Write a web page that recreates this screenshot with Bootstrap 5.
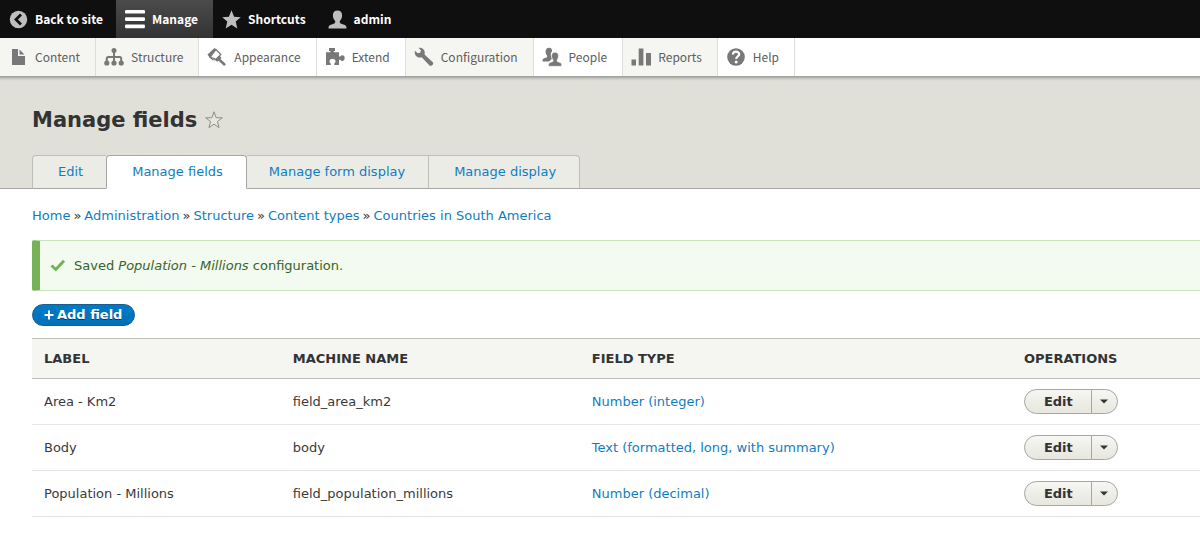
<!DOCTYPE html>
<html lang="en">
<head>
<meta charset="utf-8">
<meta name="viewport" content="width=device-width, initial-scale=1">
<title>Manage fields</title>
<link href="https://cdn.jsdelivr.net/npm/bootstrap@5.3.0/dist/css/bootstrap.min.css" rel="stylesheet">
<style>
  body { font: 13px/20px "DejaVu Sans", sans-serif; color: #3a3a3a; background: #fff; overflow-x: hidden; }
  a { color: #117dc1; text-decoration: none; }
  main a:hover { text-decoration: underline; }
  svg { display: block; flex: none; }

  /* Toolbar */
  .admin-bar, .admin-tray { font-family: "Noto Sans CJK SC", sans-serif; font-size: 12px; line-height: 18px; }
  .admin-bar { background: #0f0f0f; height: 38px; position: relative; z-index: 2; }
  .admin-bar a { color: #fff; font-weight: 700; gap: 7px; padding: 0 13px 0 9px; }
  .admin-bar a.current { background: linear-gradient(#4b4b4b, #333); padding-right: 15px; }
  .admin-bar svg { fill: #bebebe; }
  .admin-bar .current svg { fill: #fff; }
  .admin-tray { background: #fff; height: 38px; box-shadow: 0 0 3px 2px #969696; position: relative; }
  .admin-tray a { color: #5e5e5e; gap: 7px; padding: 0 15px 0 8px; border-right: 1px solid #ddd; }
  .admin-tray a.shaded { background: #f5f5f2; }
  .admin-tray svg { fill: #787878; }

  /* Page header and tabs */
  .page-head { background: #e0e0d8; border-bottom: 1px solid #a6a6a6; padding: 30px 0 0 32px; }
  .page-head h1 { font-size: 21px; line-height: 28px; font-weight: 700; color: #333; }
  .page-tabs { border: 0; margin: 21px 0 -1px; }
  .page-tabs .nav-link { color: #117dc1; background: #ebece6; border: 1px solid #bfbfba; border-width: 1px 0 1px 1px; border-bottom-color: #a6a6a6; border-radius: 0; margin: 0; padding: 6px 23px 6px 25px; }
  .page-tabs .nav-item:first-child .nav-link { border-top-left-radius: 4px; }
  .page-tabs .nav-item:last-child .nav-link { border-right-width: 1px; border-top-right-radius: 4px; }
  .page-tabs .nav-link.active { color: #117dc1; background: #fff; border: 1px solid #a6a6a6; border-bottom-color: #fff; border-radius: 4px 4px 0 0; }
  .page-tabs .after-active .nav-link { border-left-width: 0; padding-left: 22px; }

  /* Content */
  .page-body { padding: 17px 0 18px 32px; }
  .trail { --bs-breadcrumb-divider: "»"; --bs-breadcrumb-item-padding-x: 3px; --bs-breadcrumb-divider-color: #333; font-size: 13px; margin-bottom: 14px; }
  .status-message { color: #38632a; background: #f3faef; border: 1px solid #c9e1bd; border-left: 8px solid #77b259; border-right: 0; border-radius: 2px 0 0 2px; padding: 15px 10px 14px; gap: 8px; margin-bottom: 13px; }
  .add-field { color: #fff; background: linear-gradient(#007bc6, #0071b8); border: 1px solid #1e5c90; border-radius: 20px; font-size: 13px; line-height: 20px; font-weight: 700; padding: 0 12px 0 11px; gap: 3px; text-shadow: 0 1px rgba(0,0,0,.5); }
  .add-field:hover { color: #fff; }
  .fields-list { margin: 12px 0 0; color: #3a3a3a; table-layout: fixed; }
  .fields-list th, .fields-list td { padding: 10px 12px; line-height: 20px; }
  .fields-list thead th { background: #f5f5f2; color: #333; border-top: 1px solid #bfbfba; border-bottom: 1px solid #bfbfba; padding: 10px 12px 9px; text-transform: uppercase; }
  .fields-list tbody td { border-bottom: 1px solid #e6e4df; color: #3a3a3a; }
  .ops { height: 25px; vertical-align: top; }
  .ops .btn { color: #333; background: linear-gradient(#f6f6f3, #e7e7df); border: 1px solid #a6a6a6; font-size: 13px; line-height: 20px; font-weight: 700; padding: 1px 18px 1px 19px; }
  .ops .btn:first-child { border-radius: 20px 0 0 20px; }
  .ops .btn:last-child { border-radius: 0 20px 20px 0; padding: 0 9px 0 8px; }
</style>
</head>
<body>
<nav class="admin-bar d-flex" aria-label="Toolbar">
  <a href="#" class="d-flex align-items-center"><svg width="19" height="19" viewBox="0 0 19 19"><circle cx="9.5" cy="9.5" r="8.7"/><path d="M12 4.5 7 9.5l5 5" fill="none" stroke="#0f0f0f" stroke-width="2.8"/></svg>Back to site</a>
  <a href="#" class="d-flex align-items-center current"><svg width="20" height="20" viewBox="0 0 20 20"><rect y="1" width="20" height="3.6" rx="1.2"/><rect y="8.3" width="20" height="3.6" rx="1.2"/><rect y="15.6" width="20" height="3.6" rx="1.2"/></svg>Manage</a>
  <a href="#" class="d-flex align-items-center"><svg width="19" height="19" viewBox="0 0 19 19"><path d="m9.5.3 2.6 6.4 6.7.5-5.1 4.4 1.6 6.9-5.8-3.7-5.8 3.7 1.6-6.9L.2 7.200l6.700-.5z"/></svg>Shortcuts</a>
  <a href="#" class="d-flex align-items-center"><svg width="19" height="19" viewBox="0 0 19 19"><path d="M9.500.5c2.900 0 4.600 1.800 4.600 4.700 0 2.200-.9 4.400-2.100 5.600-.5.600-.2 2.200.6 2.600l4.200 1.500c1.300.5 1.700 1.400 1.700 3.600H.5c0-2.200.4-3.100 1.700-3.600l4.200-1.500c.8-.4 1.100-2 .6-2.600-1.200-1.200-2.100-3.400-2.100-5.600C4.900 2.300 6.600.5 9.500.5z"/></svg>admin</a>
</nav>
<nav class="admin-tray d-flex" aria-label="Administration menu">
  <a href="#" class="d-flex align-items-center shaded"><svg width="20" height="20" viewBox="0 0 20 20"><path d="M4 2h6v7h7v9H4zM11.500 2.500 16.500 7.500h-5z"/></svg>Content</a>
  <a href="#" class="d-flex align-items-center shaded"><svg width="20" height="20" viewBox="0 0 20 20"><circle cx="10" cy="3.600" r="2.500"/><path d="M10 5v11M2.800 15v-3.500q0-1.500 1.500-1.500h11.400q1.500 0 1.500 1.500V15" fill="none" stroke="#787878" stroke-width="2"/><circle cx="2.800" cy="16" r="2.600"/><circle cx="10" cy="16" r="2.600"/><circle cx="17.200" cy="16" r="2.600"/></svg>Structure</a>
  <a href="#" class="d-flex align-items-center"><svg width="20" height="20" viewBox="0 0 20 20"><path d="M.5 7.500 7.500 1l1.800 1.500L4.500 8l-1.700 3z"/><path d="m3.500 10 5.500-7.500 4.800 5L9 12.500z" fill="none" stroke="#787878" stroke-width="1.200"/><path d="m3 9.500 3.500 3 4-1.200L8.500 13l-3 .2-2.700-2.500zM12.300 8.500l2.200 2.200-1 1.300 5.500 5.200-1.900 1.900-5.500-5.300-1.600 1-2-2z"/></svg>Appearance</a>
  <a href="#" class="d-flex align-items-center"><svg width="20" height="20" viewBox="0 0 20 20"><path d="M1 5.200h4.500V4H4V1h6v3H8.800v1.200H14v4.300h1.500c.3-.9.900-1.300 1.800-1.300 1.500 0 2.400 1.200 2.400 2.900s-.9 2.900-2.400 2.900c-.9 0-1.500-.4-1.800-1.300H14V18H9.300v-1.500c.7-.5 1.200-1.200 1.200-2.200 0-1.500-1.200-2.600-3-2.600s-3 1.100-3 2.600c0 1 .5 1.700 1.200 2.200V18H1z"/></svg>Extend</a>
  <a href="#" class="d-flex align-items-center shaded"><svg width="20" height="20" viewBox="0 0 20 20"><path d="M1 3.700 3.700 6.300l2.500-.6.700-2.500L4.500.8C7.500.2 10.500 2 10.700 5c.1 1 0 1.700-.2 2.500l8.300 7.700c1.600 1.700-1.400 4.800-3.300 3.300L7.700 10.300C4 11.500-.3 8.500 1 3.700z"/></svg>Configuration</a>
  <a href="#" class="d-flex align-items-center"><svg width="20" height="20" viewBox="0 0 20 20"><path d="M7 .8c2.300 0 3.300 1.500 3 3.700C8.500 5.700 8.500 8 9.200 10c.3 1 .8 1.300.5 2L7 14.500H.5c0-2 .3-2.800 1.500-3.200l2.500-.9c.7-.3.9-1.400.4-2C2.800 6 3.200.8 7 .8z"/><path d="M13 5.300c3.800 0 4.300 4.200 2.300 7.400-.5.700-.3 1.800.5 2.100l2.300.8c1.300.4 1.600 1.400 1.600 3.700H6.500c0-2.300.3-3.300 1.500-3.700l2.400-.8c.8-.3 1-1.400.5-2.100C8.700 9.500 9.200 5.300 13 5.300z" stroke="#fff" stroke-width=".5"/></svg>People</a>
  <a href="#" class="d-flex align-items-center shaded"><svg width="20" height="20" viewBox="0 0 20 20"><path d="M.5 12.500H5v6H.5zM7.700 1.500h4.700v17H7.700zM15 6h5v12.500h-5z"/></svg>Reports</a>
  <a href="#" class="d-flex align-items-center"><svg width="20" height="20" viewBox="0 0 20 20"><circle cx="10" cy="10" r="8.800"/><path d="M6.900 7.500C7 5.500 8.200 4.700 10 4.700s3.200.9 3.200 2.600c0 2.200-3 2.200-3 4.700" fill="none" stroke="#fff" stroke-width="2.200"/><circle cx="10.200" cy="14.900" r="1.500" fill="#fff"/></svg>Help</a>
</nav>

<header class="page-head">
  <div class="d-flex align-items-center gap-2">
    <h1 class="mb-0">Manage fields</h1>
    <svg width="18" height="18" viewBox="0 0 18 18"><path d="m9 .8 2.100 5.900 6.200.1-4.900 3.800 1.700 6L9 13.200l-5.100 3.400 1.700-6L.7 6.800l6.200-.1z" fill="#e6e6df" stroke="#8e8e80"/></svg>
  </div>
  <ul class="nav nav-tabs page-tabs">
    <li class="nav-item"><a class="nav-link" href="#">Edit</a></li>
    <li class="nav-item"><a class="nav-link active" aria-current="page" href="#">Manage fields</a></li>
    <li class="nav-item after-active"><a class="nav-link" href="#">Manage form display</a></li>
    <li class="nav-item"><a class="nav-link" href="#">Manage display</a></li>
  </ul>
</header>

<main class="page-body">
  <nav aria-label="Breadcrumb">
    <ol class="breadcrumb trail">
      <li class="breadcrumb-item"><a href="#">Home</a></li>
      <li class="breadcrumb-item"><a href="#">Administration</a></li>
      <li class="breadcrumb-item"><a href="#">Structure</a></li>
      <li class="breadcrumb-item"><a href="#">Content types</a></li>
      <li class="breadcrumb-item"><a href="#">Countries in South America</a></li>
    </ol>
  </nav>
  <div class="alert status-message d-flex align-items-center" role="status">
    <svg width="16" height="16" viewBox="0 0 16 16"><path d="m1.500 7.500 4.300 4 8.200-8.700" fill="none" stroke="#73b355" stroke-width="3"/></svg>
    <div>Saved <em>Population - Millions</em> configuration.</div>
  </div>
  <a href="#" class="btn add-field d-inline-flex align-items-center"><svg width="10" height="10" viewBox="0 0 10 10"><path d="M5 .5v9M.5 5h9" stroke="#fff" stroke-width="2"/></svg>Add field</a>
  <table class="table fields-list">
    <colgroup><col style="width:21.3%"><col style="width:25.6%"><col style="width:37%"><col></colgroup>
    <thead>
      <tr><th scope="col">Label</th><th scope="col">Machine name</th><th scope="col">Field type</th><th scope="col">Operations</th></tr>
    </thead>
    <tbody>
      <tr><td class="align-middle">Area - Km2</td><td class="align-middle">field_area_km2</td><td class="align-middle"><a href="#">Number (integer)</a></td>
        <td><div class="btn-group ops"><button type="button" class="btn">Edit</button><button type="button" class="btn" aria-label="List additional actions"><svg width="8" height="5" viewBox="0 0 8 5"><path d="M0 .5h8L4 4.500z" fill="#333"/></svg></button></div></td></tr>
      <tr><td class="align-middle">Body</td><td class="align-middle">body</td><td class="align-middle"><a href="#">Text (formatted, long, with summary)</a></td>
        <td><div class="btn-group ops"><button type="button" class="btn">Edit</button><button type="button" class="btn" aria-label="List additional actions"><svg width="8" height="5" viewBox="0 0 8 5"><path d="M0 .5h8L4 4.500z" fill="#333"/></svg></button></div></td></tr>
      <tr><td class="align-middle">Population - Millions</td><td class="align-middle">field_population_millions</td><td class="align-middle"><a href="#">Number (decimal)</a></td>
        <td><div class="btn-group ops"><button type="button" class="btn">Edit</button><button type="button" class="btn" aria-label="List additional actions"><svg width="8" height="5" viewBox="0 0 8 5"><path d="M0 .5h8L4 4.500z" fill="#333"/></svg></button></div></td></tr>
    </tbody>
  </table>
</main>
<script src="https://cdn.jsdelivr.net/npm/bootstrap@5.3.0/dist/js/bootstrap.bundle.min.js"></script>
</body>
</html>
